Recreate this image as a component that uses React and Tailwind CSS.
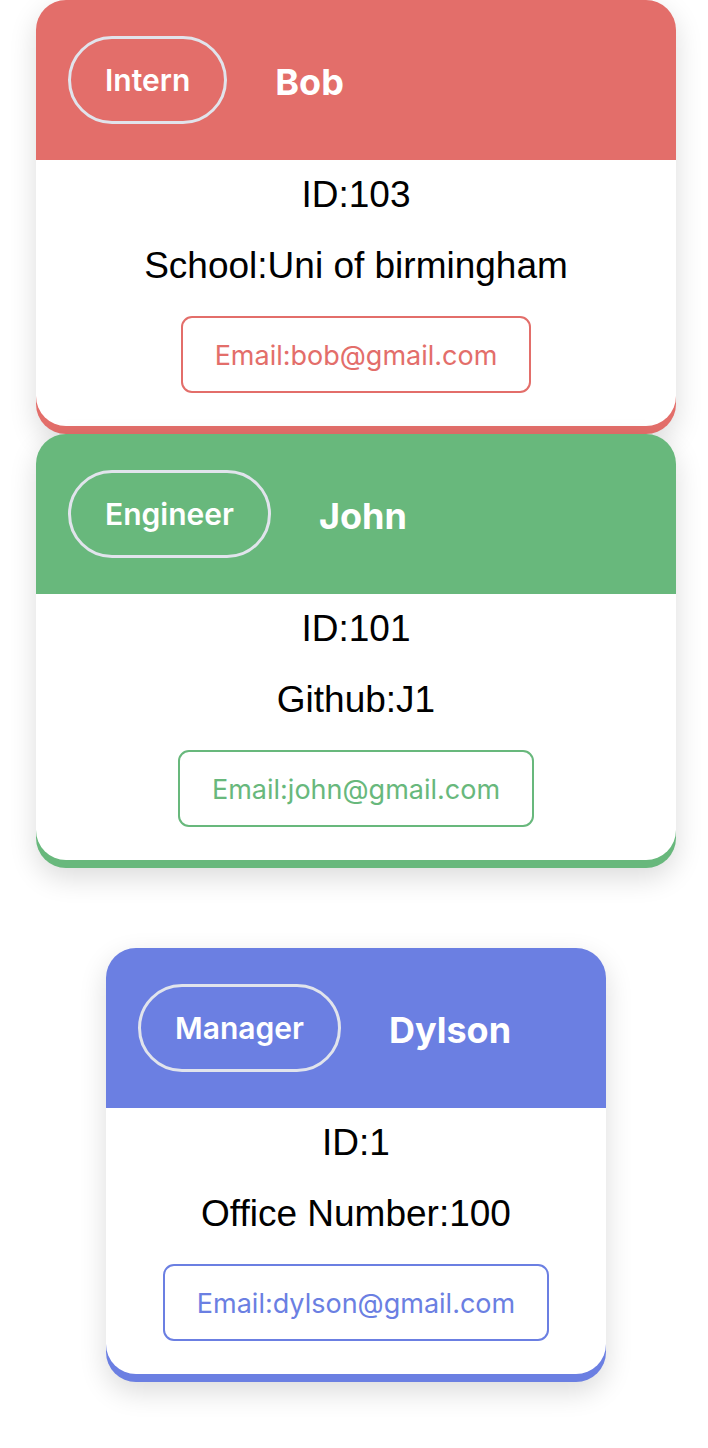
const employees = [
  {
    id: 103,
    name: 'Bob',
    role: 'Intern',
    extra: 'School:Uni of birmingham',
    email: 'bob@gmail.com',
    theme: 'red',
  },
  {
    id: 101,
    name: 'John',
    role: 'Engineer',
    extra: 'Github:J1',
    email: 'john@gmail.com',
    theme: 'green',
  },
];

const manager = {
  id: 1,
  name: 'Dylson',
  role: 'Manager',
  extra: 'Office Number:100',
  email: 'dylson@gmail.com',
  theme: 'blue',
};

const themes = {
  red: { bg: 'bg-[#e36e6a]', text: 'text-[#e36e6a]', border: 'border-[#e36e6a]' },
  green: { bg: 'bg-[#68b87c]', text: 'text-[#68b87c]', border: 'border-[#68b87c]' },
  blue: { bg: 'bg-[#6b7fe2]', text: 'text-[#6b7fe2]', border: 'border-[#6b7fe2]' },
};

function EmployeeCard({ employee, width }) {
  const t = themes[employee.theme];

  return (
    <div className={`${width} ${t.bg} rounded-[30px] pb-2 shadow-[0_10px_28px_rgba(0,0,0,0.14)]`}>
      <div className="flex items-center gap-12 px-8 py-9">
        <span className="flex h-[88px] items-center rounded-full border-[3px] border-[#e1e4ec] px-[34px] text-[30px] font-semibold text-white">
          {employee.role}
        </span>
        <h2 className="pt-1 text-[36px] font-bold text-white">{employee.name}</h2>
      </div>
      <div className="flex flex-col items-center rounded-b-[30px] bg-white pt-2 pb-[33px] font-['Liberation_Sans',Arial,sans-serif] text-[37px] text-black">
        <p className="leading-[54px]">ID:{employee.id}</p>
        <p className="mt-[17px] leading-[54px]">{employee.extra}</p>
        <a
          href={`mailto:${employee.email}`}
          className={`mt-[23px] flex h-[77px] items-center rounded-[11px] border-2 ${t.border} px-8 pt-1 font-['Inter',sans-serif] text-[27px] ${t.text}`}
        >
          Email:{employee.email}
        </a>
      </div>
    </div>
  );
}

export default function App() {
  return (
    <div className="flex min-h-[1448px] flex-col items-center bg-white pl-1 font-['Inter',sans-serif]">
      {employees.map((emp) => (
        <EmployeeCard key={emp.id} employee={emp} width="w-[640px]" />
      ))}
      <div className="mt-20">
        <EmployeeCard employee={manager} width="w-[500px]" />
      </div>
    </div>
  );
}
